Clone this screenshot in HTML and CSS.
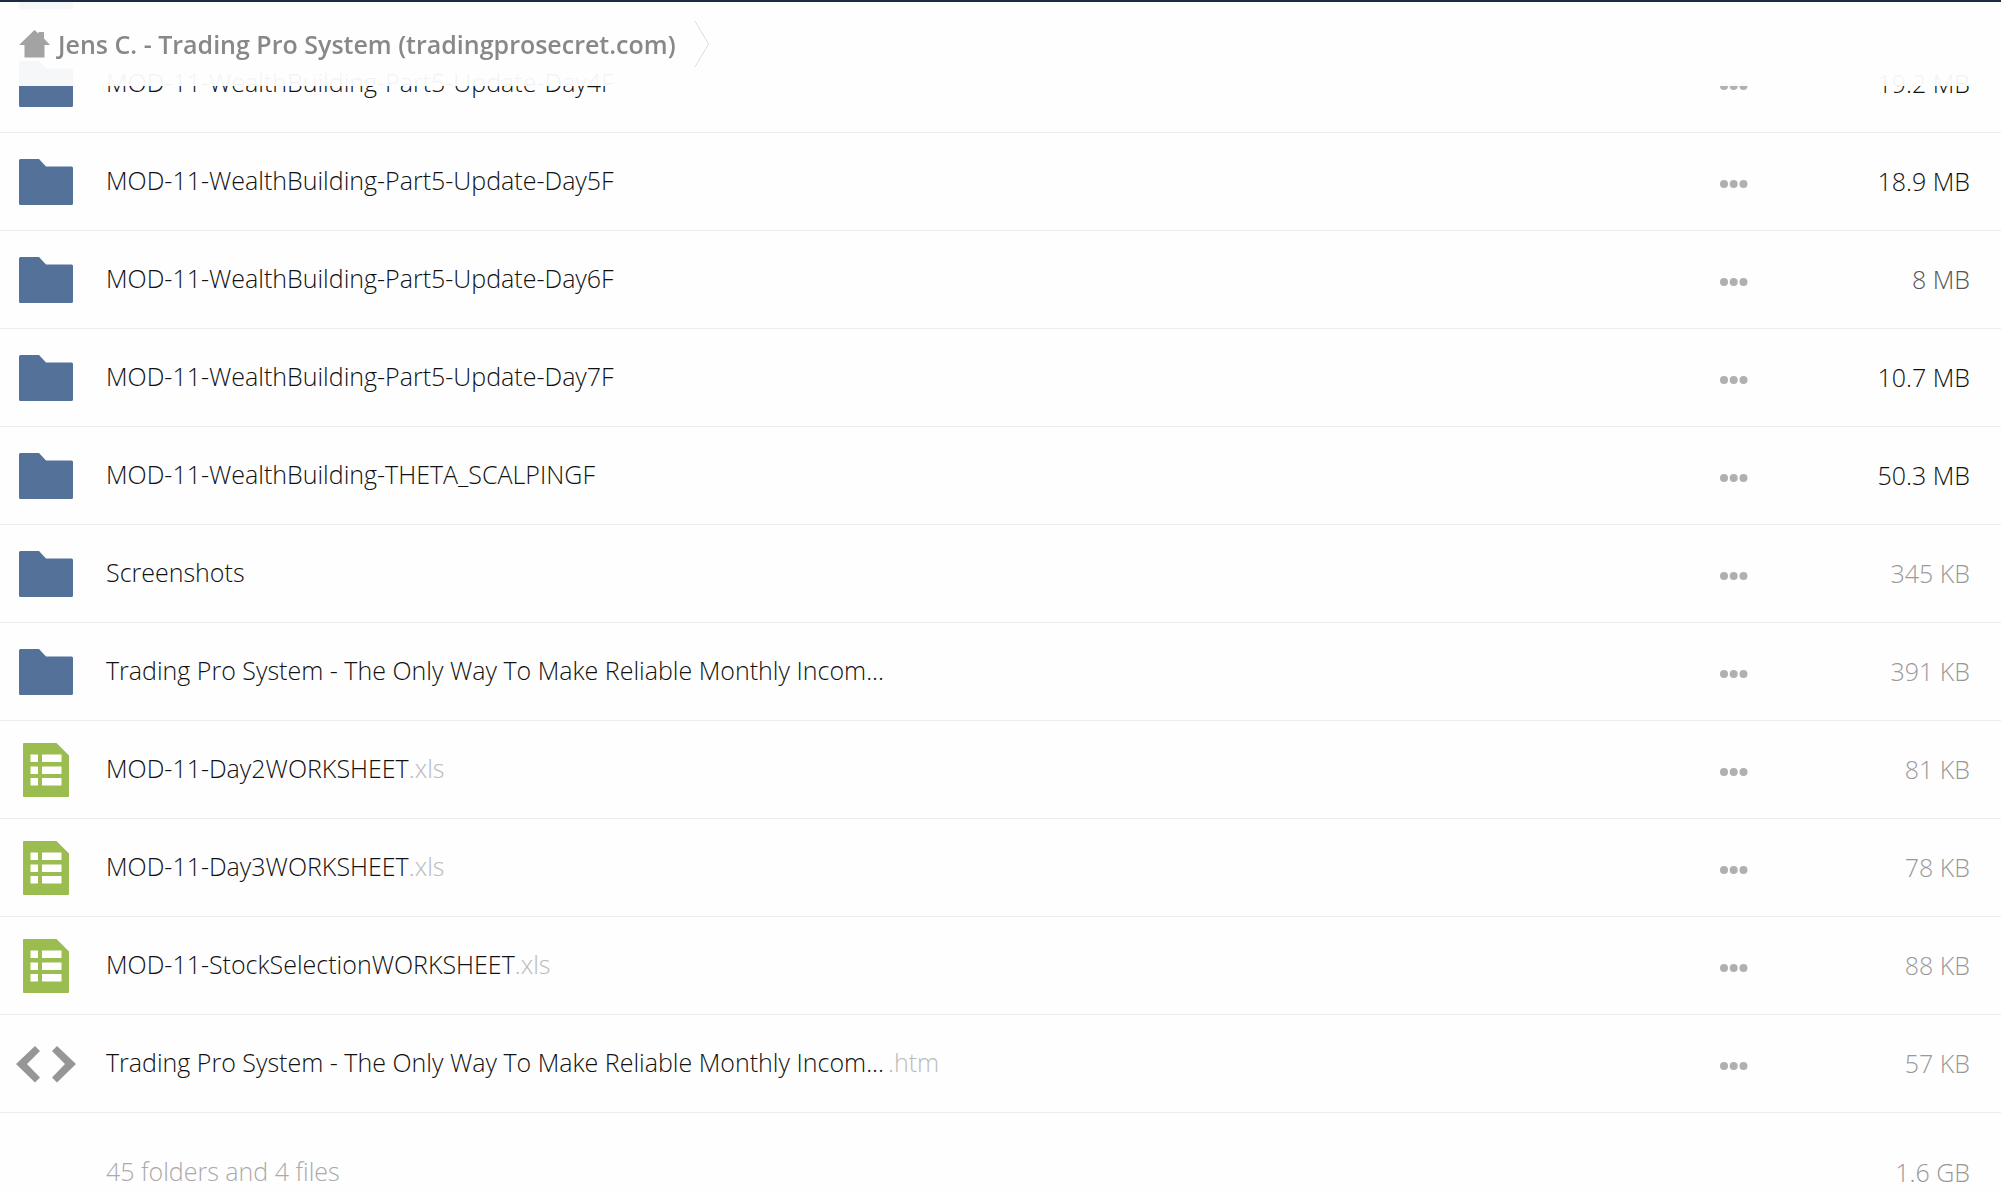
FILE: index.html
```
<!DOCTYPE html>
<html lang="en">
<head>
<meta charset="utf-8">
<meta name="viewport" content="width=device-width, initial-scale=1.0">
<title>Jens C. - Trading Pro System</title>
<link rel="stylesheet" href="styles.css">
</head>
<body>

<svg class="sprite" aria-hidden="true">
	<symbol id="folder" viewBox="0 0 60 60">
		<path d="M3 8.5Q3 7 4.500 7H23L30 14.500H55.500Q57 14.500 57 16V51.500Q57 53 55.500 53H4.500Q3 53 3 51.500Z"/>
	</symbol>
	<symbol id="sheet" viewBox="0 0 60 60">
		<path fill-rule="evenodd" d="M7 4Q7 3 8 3H40.500L53 15.500V56Q53 57 52 57H8Q7 57 7 56Z M14.500 14.500V22H22V14.500Z M26 14.500V22H45.500V14.500Z M14.500 26.500V34H22V26.500Z M26 26.500V34H45.500V26.500Z M14.500 38V45.500H22V38Z M26 38V45.500H45.500V38Z"/>
	</symbol>
	<symbol id="code" viewBox="0 0 60 60">
		<path d="M19 12L24 17L11 30L24 43.500L19 48.500L0 30Z M41 12L36 17L49 30L36 43.500L41 48.500L60 30Z"/>
	</symbol>
	<symbol id="dots" viewBox="0 0 28 8">
		<circle cx="4" cy="4" r="4"/><circle cx="13.700" cy="4" r="4"/><circle cx="23.500" cy="4" r="4"/>
	</symbol>
</svg>

<header class="path-bar">
	<a class="home" href="#">
		<svg class="house" viewBox="0 0 31 28"><path d="M15.500 0L19.500 3.700V2H25V8.500L31 15H25.500V27.500H5.500V15H0Z"/></svg>
		<span>Jens C. - Trading Pro System (tradingprosecret.com)</span>
	</a>
	<svg class="separator" viewBox="0 0 16 48"><path d="M1 1L14.500 24L1 47"/></svg>
</header>

<main class="listing">
<table>
	<tbody>
	<tr><td class="icon"><svg class="folder"><use href="#folder"/></svg></td><td class="name"></td><td class="menu"></td><td class="size"></td></tr>
	<tr><td class="icon"><svg class="folder"><use href="#folder"/></svg></td><td class="name"><a href="#">MOD-11-WealthBuilding-Part5-Update-Day4F</a></td><td class="menu"><button aria-label="Menu"><svg><use href="#dots"/></svg></button></td><td class="size large">19.2 MB</td></tr>
	<tr><td class="icon"><svg class="folder"><use href="#folder"/></svg></td><td class="name"><a href="#">MOD-11-WealthBuilding-Part5-Update-Day5F</a></td><td class="menu"><button aria-label="Menu"><svg><use href="#dots"/></svg></button></td><td class="size large">18.9 MB</td></tr>
	<tr><td class="icon"><svg class="folder"><use href="#folder"/></svg></td><td class="name"><a href="#">MOD-11-WealthBuilding-Part5-Update-Day6F</a></td><td class="menu"><button aria-label="Menu"><svg><use href="#dots"/></svg></button></td><td class="size medium">8 MB</td></tr>
	<tr><td class="icon"><svg class="folder"><use href="#folder"/></svg></td><td class="name"><a href="#">MOD-11-WealthBuilding-Part5-Update-Day7F</a></td><td class="menu"><button aria-label="Menu"><svg><use href="#dots"/></svg></button></td><td class="size large">10.7 MB</td></tr>
	<tr><td class="icon"><svg class="folder"><use href="#folder"/></svg></td><td class="name"><a href="#">MOD-11-WealthBuilding-THETA_SCALPINGF</a></td><td class="menu"><button aria-label="Menu"><svg><use href="#dots"/></svg></button></td><td class="size large">50.3 MB</td></tr>
	<tr><td class="icon"><svg class="folder"><use href="#folder"/></svg></td><td class="name"><a href="#">Screenshots</a></td><td class="menu"><button aria-label="Menu"><svg><use href="#dots"/></svg></button></td><td class="size">345 KB</td></tr>
	<tr><td class="icon"><svg class="folder"><use href="#folder"/></svg></td><td class="name"><a href="#">Trading Pro System - The Only Way To Make Reliable Monthly Incom...</a></td><td class="menu"><button aria-label="Menu"><svg><use href="#dots"/></svg></button></td><td class="size">391 KB</td></tr>
	<tr><td class="icon"><svg class="sheet"><use href="#sheet"/></svg></td><td class="name"><a href="#">MOD-11-Day2WORKSHEET<span class="ext">.xls</span></a></td><td class="menu"><button aria-label="Menu"><svg><use href="#dots"/></svg></button></td><td class="size">81 KB</td></tr>
	<tr><td class="icon"><svg class="sheet"><use href="#sheet"/></svg></td><td class="name"><a href="#">MOD-11-Day3WORKSHEET<span class="ext">.xls</span></a></td><td class="menu"><button aria-label="Menu"><svg><use href="#dots"/></svg></button></td><td class="size">78 KB</td></tr>
	<tr><td class="icon"><svg class="sheet"><use href="#sheet"/></svg></td><td class="name"><a href="#">MOD-11-StockSelectionWORKSHEET<span class="ext">.xls</span></a></td><td class="menu"><button aria-label="Menu"><svg><use href="#dots"/></svg></button></td><td class="size">88 KB</td></tr>
	<tr><td class="icon"><svg class="code"><use href="#code"/></svg></td><td class="name"><a href="#">Trading Pro System - The Only Way To Make Reliable Monthly Incom...<span class="ext cut">.htm</span></a></td><td class="menu"><button aria-label="Menu"><svg><use href="#dots"/></svg></button></td><td class="size">57 KB</td></tr>
	</tbody>
	<tfoot>
	<tr><td class="icon"></td><td class="name">45 folders and 4 files</td><td class="menu"></td><td class="size">1.6 GB</td></tr>
	</tfoot>
</table>
</main>

</body>
</html>
```
FILE: styles.css
```
body {
	margin: 0;
	height: 100vh;
	overflow: hidden;
	background: #fefefe;
	color: #111;
	font: 300 25px/36px "Open Sans", sans-serif;
}
a {
	color: inherit;
	text-decoration: none;
}
.sprite {
	display: none;
}

.path-bar {
	position: fixed;
	top: 0;
	left: 0;
	right: 0;
	z-index: 1;
	box-sizing: border-box;
	height: 86px;
	padding: 18px 19px 0;
	border-top: 2px solid #1c2b44;
	background: rgba(254, 254, 254, 0.95);
	display: flex;
	align-items: flex-start;
}
.home {
	display: flex;
	align-items: center;
	gap: 8px;
	height: 48px;
	color: #888;
	font-weight: 600;
}
.house {
	width: 31px;
	height: 28px;
	fill: #a3a3a3;
}
.separator {
	width: 16px;
	height: 48px;
	margin-left: 18px;
	fill: none;
	stroke: #ddd;
}

.listing {
	margin-top: -63px;
}
table {
	width: 100%;
	border-collapse: separate;
	border-spacing: 0;
	table-layout: fixed;
}
td {
	box-sizing: border-box;
	height: 98px;
	padding: 0;
	border-bottom: 1px solid #ececec;
	white-space: nowrap;
}
.icon {
	width: 106px;
	padding-left: 16px;
}
.icon svg {
	display: block;
	width: 60px;
	height: 60px;
}
.folder { fill: #547199; }
.sheet { fill: #9bbd4f; }
.code { fill: #969696; }
.name {
	padding-bottom: 3px;
	overflow: hidden;
	text-overflow: ellipsis;
}
.ext {
	color: #bbb;
}
.ext.cut {
	margin-left: 4px;
}
.menu {
	width: 88px;
}
.menu button {
	display: block;
	padding: 4px 0 0;
	border: 0;
	background: none;
	cursor: pointer;
}
.menu svg {
	display: block;
	width: 28px;
	height: 8px;
	fill: #b0b0b0;
}
.size {
	width: 193px;
	padding: 0 31px 1px 0;
	color: #999;
	text-align: right;
}
.size.medium { color: #555; }
.size.large { color: #111; }
tfoot td {
	height: 118px;
	border: 0;
	color: #aaa;
}
```
